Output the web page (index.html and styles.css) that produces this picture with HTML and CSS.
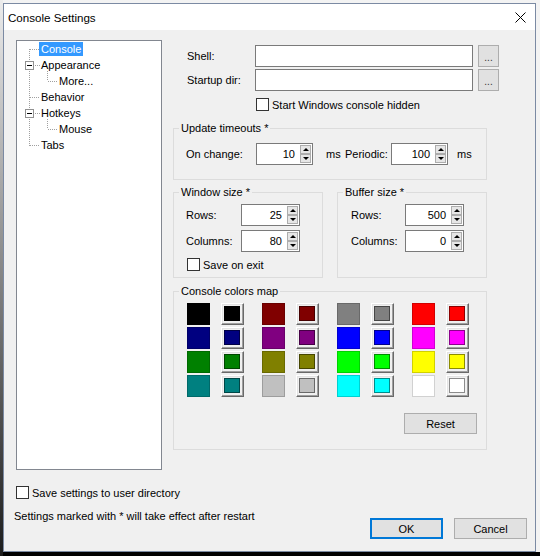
FILE: index.html
```html
<!DOCTYPE html>
<html>
<head>
<meta charset="utf-8">
<title>Console Settings</title>
<link rel="stylesheet" href="styles.css">
</head>
<body>
<div class="desktop">
  <div class="window">
    <div class="titlebar">
      <span class="title">Console Settings</span>
      <svg class="close" width="11" height="11" viewBox="0 0 11 11"><path d="M0.5 0.5 L10.5 10.5 M10.5 0.5 L0.5 10.5" stroke="#000" stroke-width="1"/></svg>
    </div>
    <div class="client">
      <div class="main">
        <div class="tree">
          <svg class="tree-lines" width="60" height="110" viewBox="0 0 60 110" shape-rendering="crispEdges">
            <g stroke="#a0a0a0" stroke-width="1" stroke-dasharray="1 1" fill="none">
              <line x1="12.5" y1="8" x2="12.5" y2="20"/>
              <line x1="12.5" y1="30" x2="12.5" y2="68"/>
              <line x1="12.5" y1="78" x2="12.5" y2="105"/>
              <line x1="13" y1="8.5" x2="23" y2="8.5"/>
              <line x1="18" y1="24.5" x2="23" y2="24.5"/>
              <line x1="13" y1="56.5" x2="23" y2="56.5"/>
              <line x1="18" y1="72.5" x2="23" y2="72.5"/>
              <line x1="13" y1="104.5" x2="23" y2="104.5"/>
              <line x1="30.5" y1="30" x2="30.5" y2="40"/>
              <line x1="31" y1="40.5" x2="41" y2="40.5"/>
              <line x1="30.5" y1="78" x2="30.5" y2="88"/>
              <line x1="31" y1="88.5" x2="41" y2="88.5"/>
            </g>
            <g stroke="#919191" fill="#fff">
              <rect x="8.5" y="20.5" width="8" height="8"/>
              <rect x="8.5" y="68.5" width="8" height="8"/>
            </g>
            <g stroke="#000">
              <line x1="10" y1="24.5" x2="15" y2="24.5"/>
              <line x1="10" y1="72.5" x2="15" y2="72.5"/>
            </g>
          </svg>
          <div class="tree-row lvl0"><span class="item selected">Console</span></div>
          <div class="tree-row lvl0"><span class="item">Appearance</span></div>
          <div class="tree-row lvl1"><span class="item">More...</span></div>
          <div class="tree-row lvl0"><span class="item">Behavior</span></div>
          <div class="tree-row lvl0"><span class="item">Hotkeys</span></div>
          <div class="tree-row lvl1"><span class="item">Mouse</span></div>
          <div class="tree-row lvl0"><span class="item">Tabs</span></div>
        </div>

        <div class="panel">
          <div class="field-row">
            <span class="lbl lbl-path">Shell:</span>
            <div class="textbox path"></div>
            <div class="btn browse">...</div>
          </div>
          <div class="field-row row2">
            <span class="lbl lbl-path">Startup dir:</span>
            <div class="textbox path"></div>
            <div class="btn browse">...</div>
          </div>
          <div class="check-row hidden-row">
            <span class="cb"></span><span class="cb-text">Start Windows console hidden</span>
          </div>

          <fieldset class="group g-update">
            <legend>Update timeouts *</legend>
            <div class="group-body update-body">
              <span class="lbl lbl-change">On change:</span>
              <div class="spin s57"><span class="val">10</span><span class="arrows"><span class="ar up"></span><span class="ar dn"></span></span></div>
              <span class="unit u1">ms</span>
              <span class="lbl lbl-periodic">Periodic:</span>
              <div class="spin s57"><span class="val">100</span><span class="arrows"><span class="ar up"></span><span class="ar dn"></span></span></div>
              <span class="unit u2">ms</span>
            </div>
          </fieldset>

          <div class="size-groups">
            <fieldset class="group g-size">
              <legend>Window size *</legend>
              <div class="group-body size-body win-body">
                <div class="size-row">
                  <span class="lbl lbl-size">Rows:</span>
                  <div class="spin s59"><span class="val">25</span><span class="arrows"><span class="ar up"></span><span class="ar dn"></span></span></div>
                </div>
                <div class="size-row r2">
                  <span class="lbl lbl-size">Columns:</span>
                  <div class="spin s59"><span class="val">80</span><span class="arrows"><span class="ar up"></span><span class="ar dn"></span></span></div>
                </div>
                <div class="check-row save-exit">
                  <span class="cb"></span><span class="cb-text">Save on exit</span>
                </div>
              </div>
            </fieldset>
            <fieldset class="group g-size">
              <legend>Buffer size *</legend>
              <div class="group-body size-body buf-body">
                <div class="size-row">
                  <span class="lbl lbl-size">Rows:</span>
                  <div class="spin s59"><span class="val">500</span><span class="arrows"><span class="ar up"></span><span class="ar dn"></span></span></div>
                </div>
                <div class="size-row r2">
                  <span class="lbl lbl-size">Columns:</span>
                  <div class="spin s59"><span class="val">0</span><span class="arrows"><span class="ar up"></span><span class="ar dn"></span></span></div>
                </div>
              </div>
            </fieldset>
          </div>

          <fieldset class="group g-colors">
            <legend>Console colors map</legend>
            <div class="group-body colors-body">
              <div class="palette">
                <div class="pair">
                  <span class="sw" style="background:#000000"></span><span class="swb"><span class="swi" style="background:#000000"></span></span>
                  <span class="sw" style="background:#000080"></span><span class="swb"><span class="swi" style="background:#000080"></span></span>
                  <span class="sw" style="background:#008000"></span><span class="swb"><span class="swi" style="background:#008000"></span></span>
                  <span class="sw" style="background:#008080"></span><span class="swb"><span class="swi" style="background:#008080"></span></span>
                </div>
                <div class="pair">
                  <span class="sw" style="background:#800000"></span><span class="swb"><span class="swi" style="background:#800000"></span></span>
                  <span class="sw" style="background:#800080"></span><span class="swb"><span class="swi" style="background:#800080"></span></span>
                  <span class="sw" style="background:#808000"></span><span class="swb"><span class="swi" style="background:#808000"></span></span>
                  <span class="sw" style="background:#c0c0c0"></span><span class="swb"><span class="swi" style="background:#c0c0c0"></span></span>
                </div>
                <div class="pair">
                  <span class="sw" style="background:#808080"></span><span class="swb"><span class="swi" style="background:#808080"></span></span>
                  <span class="sw" style="background:#0000ff"></span><span class="swb"><span class="swi" style="background:#0000ff"></span></span>
                  <span class="sw" style="background:#00ff00"></span><span class="swb"><span class="swi" style="background:#00ff00"></span></span>
                  <span class="sw" style="background:#00ffff"></span><span class="swb"><span class="swi" style="background:#00ffff"></span></span>
                </div>
                <div class="pair">
                  <span class="sw" style="background:#ff0000"></span><span class="swb"><span class="swi" style="background:#ff0000"></span></span>
                  <span class="sw" style="background:#ff00ff"></span><span class="swb"><span class="swi" style="background:#ff00ff"></span></span>
                  <span class="sw" style="background:#ffff00"></span><span class="swb"><span class="swi" style="background:#ffff00"></span></span>
                  <span class="sw" style="background:#ffffff"></span><span class="swb"><span class="swi" style="background:#ffffff"></span></span>
                </div>
              </div>
              <div class="reset-row"><div class="btn reset">Reset</div></div>
            </div>
          </fieldset>
        </div>
      </div>

      <div class="footer">
        <div class="check-row user-dir">
          <span class="cb"></span><span class="cb-text">Save settings to user directory</span>
        </div>
        <div class="note-row">
          <span class="note">Settings marked with * will take effect after restart</span>
          <div class="buttons">
            <div class="btn dlg default">OK</div>
            <div class="btn dlg">Cancel</div>
          </div>
        </div>
      </div>
    </div>
  </div>
</div>
</body>
</html>
```

FILE: styles.css
```css
* { box-sizing: border-box; }

html, body {
  margin: 0;
  padding: 0;
}

body {
  font-family: "Liberation Sans", Arial, sans-serif;
  font-size: 11px;
  color: #000;
  background: #000;
}

.desktop {
  width: 540px;
  height: 556px;
  padding: 3px 0 0 3px;
  background:
    linear-gradient(#ececec, #1c1c1c) left top / 3px 100% no-repeat,
    linear-gradient(#f3f3f3 552px, #000 552px);
}

.window {
  width: 533px;
  height: 549px;
  border: 1px solid #7b8aa3;
  display: flex;
  flex-direction: column;
  background: #f0f0f0;
}

.titlebar {
  height: 26px;
  flex: none;
  background: #fff;
  display: flex;
  align-items: center;
  padding-left: 4px;
  padding-right: 9px;
}

.title {
  font-size: 11.6px;
  flex: 1;
  padding-top: 1px;
}

.close {
  display: block;
  margin-top: 0;
}

.client {
  flex: 1;
  padding: 10px 8px 0 12px;
  display: flex;
  flex-direction: column;
}

.main {
  display: flex;
  gap: 11px;
  align-items: flex-start;
}

/* tree */
.tree {
  position: relative;
  width: 146px;
  height: 430px;
  flex: none;
  background: #fff;
  border: 1px solid #828790;
}

.tree-lines {
  position: absolute;
  left: 0;
  top: 0;
}

.tree-row {
  height: 16px;
  display: flex;
  align-items: center;
  position: relative;
}

.lvl0 { padding-left: 22px; }
.lvl1 { padding-left: 40px; }

.item {
  line-height: 14px;
  padding: 0 2px;
}

.item.selected {
  background: #3399ff;
  color: #fff;
}

/* right panel */
.panel {
  width: 314px;
  flex: none;
  padding-top: 5px;
}

.field-row {
  display: flex;
  align-items: center;
  height: 22px;
  padding-left: 14px;
}

.field-row > * { flex: none; }

.field-row.row2 { margin-top: 2px; }

.lbl-path { width: 68px; }

.textbox {
  height: 22px;
  background: #fff;
  border: 1px solid #7a7a7a;
}

.textbox.path { width: 218px; }

.btn {
  background: #e1e1e1;
  border: 1px solid #adadad;
  display: flex;
  align-items: center;
  justify-content: center;
}

.browse {
  width: 21px;
  height: 22px;
  margin-left: 5px;
  padding-top: 2px;
  font-size: 10px;
  color: #333;
}

.check-row {
  display: flex;
  align-items: center;
  height: 13px;
}

.cb {
  width: 13px;
  height: 13px;
  flex: none;
  background: #fff;
  border: 1px solid #333;
}

.cb-text { margin-left: 3px; white-space: nowrap; }

.hidden-row {
  margin-top: 7px;
  padding-left: 83px;
}

/* group boxes */
.group {
  margin: 0;
  padding: 0;
  border: 1px solid #dcdcdc;
  min-width: 0;
}

.group legend {
  margin-left: 5px;
  padding: 0 2px;
  line-height: 13px;
  height: 13px;
}

.g-update { margin-top: 11px; }

.update-body {
  display: flex;
  align-items: center;
  padding: 8px 0 14px 12px;
}

.update-body > * { flex: none; }

.lbl-change { width: 70px; }
.lbl-periodic { width: 46px; }

.unit.u1 { width: 32px; padding-left: 13px; }
.unit.u2 { padding-left: 9px; }

.spin {
  height: 22px;
  display: flex;
  background: #fff;
  border: 1px solid #7a7a7a;
  flex: none;
}

.spin.s57 { width: 57px; }
.spin.s59 { width: 59px; }

.spin .val {
  flex: 1;
  text-align: right;
  line-height: 20px;
  padding-right: 5px;
}

.arrows {
  width: 12px;
  display: flex;
  flex-direction: column;
  padding: 1px 1px 1px 0;
}

.ar {
  flex: 1;
  background: #e6e6e6;
  border: 1px solid #adadad;
  display: flex;
  align-items: center;
  justify-content: center;
}

.ar::after {
  content: "";
  width: 0;
  height: 0;
  border-left: 3px solid transparent;
  border-right: 3px solid transparent;
}

.ar.up::after { border-bottom: 3px solid #000; }
.ar.dn::after { border-top: 3px solid #000; }

.size-groups {
  display: flex;
  gap: 14px;
  margin-top: 6px;
}

.g-size { width: 150px; flex: none; }

.size-body { padding: 5px 0 6px 12px; }
.buf-body { padding-left: 13px; }

.size-row {
  display: flex;
  align-items: center;
}

.size-row > * { flex: none; }

.size-row.r2 { margin-top: 4px; }

.lbl-size { width: 55px; }
.buf-body .lbl-size { width: 54px; }

.save-exit {
  margin-top: 6px;
  padding-left: 1px;
}

.g-colors { margin-top: 7px; }

.colors-body { padding: 5px 0 15px 13px; }

.palette {
  display: flex;
  gap: 18px;
}

.pair {
  display: grid;
  grid-template-columns: 23px 23px;
  grid-auto-rows: 22px;
  column-gap: 11px;
  row-gap: 2px;
}

.sw {
  display: block;
  border: 1px solid rgba(0, 0, 0, 0.18);
}

.swb {
  display: block;
  background: #f0f0f0;
  border: 1px solid;
  border-color: #ffffff #696969 #696969 #ffffff;
  box-shadow: inset -1px -1px 0 #a0a0a0, inset 1px 1px 0 #e3e3e3;
  padding: 2px 3px 3px 2px;
}

.swi {
  display: block;
  width: 100%;
  height: 100%;
  border: 1px solid rgba(0, 0, 0, 0.45);
}

.reset-row {
  display: flex;
  justify-content: flex-end;
  margin-top: 16px;
  padding-right: 9px;
}

.reset {
  width: 73px;
  height: 21px;
}

/* footer */
.footer { flex: 1; }

.user-dir { margin-top: 16px; }

.note-row {
  display: flex;
  align-items: flex-start;
  margin-top: 11px;
}

.note {
  flex: 1;
  margin-left: -2px;
  line-height: 13px;
}

.buttons {
  display: flex;
  gap: 11px;
  margin-top: 8px;
}

.dlg {
  width: 73px;
  height: 21px;
}

.dlg.default {
  border-color: #0078d7;
  box-shadow: inset 0 0 0 1px #0078d7;
}
```
